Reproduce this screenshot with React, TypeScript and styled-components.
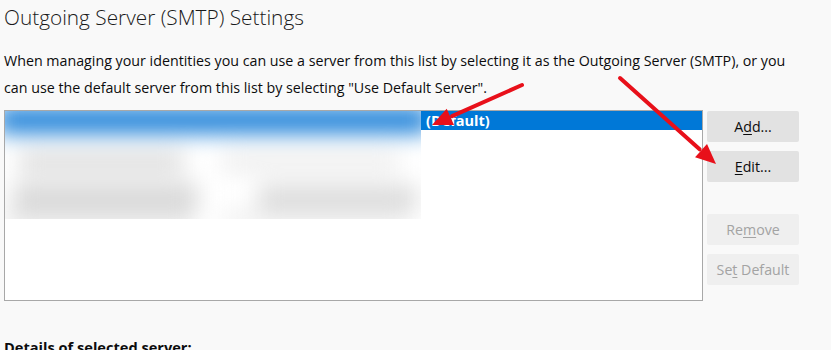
import React from "react";
import styled, { createGlobalStyle } from "styled-components";

const GlobalStyle = createGlobalStyle`
  body {
    margin: 0;
    background: #f9f9f9;
    font-family: "Open Sans", "Noto Sans", sans-serif;
    color: #0c0c0d;
    overflow: hidden;
  }
`;

const Page = styled.div`
  position: relative;
  padding: 0 4px;
  height: 350px;
  overflow: hidden;
`;

const Title = styled.h1`
  margin: 0;
  padding-top: 2px;
  font-size: 20.8px;
  font-weight: 300;
  line-height: 30px;
  color: #1a1a1a;
`;

const Description = styled.p`
  max-width: 790px;
  margin: 15px 0 0;
  font-size: 14.25px;
  line-height: 27px;
  color: #0c0c0d;
`;

const ServerRow = styled.div`
  display: flex;
  align-items: flex-start;
  gap: 4px;
  margin-top: 9px;
`;

const ListBox = styled.div`
  position: relative;
  width: 697px;
  height: 189px;
  background: #ffffff;
  border: 1px solid #a8a8a8;
  overflow: hidden;
`;

const ServerItem = styled.div<{ $selected?: boolean }>`
  display: flex;
  align-items: center;
  height: 19px;
  padding-left: 421px;
  background: ${(p) => (p.$selected ? "#0078d7" : "transparent")};
  color: ${(p) => (p.$selected ? "#ffffff" : "#0c0c0d")};
  font-size: 14.5px;
  font-weight: 700;
`;

/* redacted server names, smeared out in the screenshot */
const Redaction = styled.div`
  position: absolute;
  left: 0;
  top: 0;
  width: 416px;
  height: 108px;
  background: #ffffff;
  overflow: hidden;
`;

const Smear = styled.div`
  display: grid;
  grid-template-columns: 1fr 1fr;
  grid-template-rows: 26px 16px 24px 8px 30px 20px;
  gap: 0 18px;
  margin: -4px -8px 0;
  filter: blur(11px);
`;

const SmearBar = styled.div<{ $tone: string; $span?: boolean; $inset?: string }>`
  background: ${(p) => p.$tone};
  grid-column: ${(p) => (p.$span ? "1 / 3" : "auto")};
  margin: ${(p) => p.$inset ?? "0"};
`;

const ButtonColumn = styled.div`
  display: flex;
  flex-direction: column;
  width: 92px;
  padding-top: 1px;
`;

const ActionButton = styled.button<{ $gapBefore?: number }>`
  height: 31px;
  margin-top: ${(p) => p.$gapBefore ?? 0}px;
  border: none;
  border-radius: 2px;
  background: ${(p) => (p.disabled ? "#efefef" : "#e2e2e2")};
  color: ${(p) => (p.disabled ? "#a3a3a3" : "#0c0c0d")};
  font-family: "Open Sans", "Noto Sans", sans-serif;
  font-size: 14.2px;
  padding: 0;
  cursor: ${(p) => (p.disabled ? "default" : "pointer")};
  & u {
    text-underline-offset: 2px;
  }
`;

const DetailsHeading = styled.h2`
  margin: 36px 0 0;
  font-size: 14.6px;
  font-weight: 700;
  line-height: 20px;
`;

const Annotations = styled.svg`
  position: absolute;
  left: 0;
  top: 0;
  pointer-events: none;
`;

function Arrow({ x1, y1, x2, y2 }: { x1: number; y1: number; x2: number; y2: number }) {
  const angle = Math.atan2(y2 - y1, x2 - x1);
  const len = 22;
  const spread = 0.42;
  const back = (a: number) => [x2 - len * Math.cos(a), y2 - len * Math.sin(a)];
  const [lx, ly] = back(angle - spread);
  const [rx, ry] = back(angle + spread);
  const [sx, sy] = back(angle);
  return (
    <g>
      <line x1={x1} y1={y1} x2={sx} y2={sy} stroke="#e8101a" strokeWidth={4} strokeLinecap="round" />
      <polygon points={`${x2},${y2} ${lx},${ly} ${rx},${ry}`} fill="#e8101a" />
    </g>
  );
}

export default function App() {
  return (
    <Page>
      <GlobalStyle />
      <Title>Outgoing Server (SMTP) Settings</Title>
      <Description>
        When managing your identities you can use a server from this list by selecting it as the
        Outgoing Server (SMTP), or you can use the default server from this list by selecting "Use
        Default Server".
      </Description>
      <ServerRow>
        <ListBox>
          <ServerItem $selected>(Default)</ServerItem>
          <ServerItem />
          <ServerItem />
          <Redaction>
            <Smear>
              <SmearBar $tone="#1a7fd8" $span />
              <SmearBar $tone="#ffffff" $span />
              <SmearBar $tone="#dedede" $inset="2px 20px 0 22px" />
              <SmearBar $tone="#efefef" $inset="2px 30px 0 0" />
              <SmearBar $tone="#ffffff" $span />
              <SmearBar $tone="#d9d9d9" $inset="2px 6px 0 16px" />
              <SmearBar $tone="#dcdcdc" $inset="4px 12px 0 36px" />
              <SmearBar $tone="#e6e6e6" $inset="0 10px 4px 8px" />
              <SmearBar $tone="#efefef" $inset="0 20px 4px 0" />
            </Smear>
          </Redaction>
        </ListBox>
        <ButtonColumn>
          <ActionButton>
            A<u>d</u>d...
          </ActionButton>
          <ActionButton $gapBefore={9}>
            <u>E</u>dit...
          </ActionButton>
          <ActionButton $gapBefore={32} disabled>
            Re<u>m</u>ove
          </ActionButton>
          <ActionButton $gapBefore={9} disabled>
            Se<u>t</u> Default
          </ActionButton>
        </ButtonColumn>
      </ServerRow>
      <DetailsHeading>Details of selected server:</DetailsHeading>
      <Annotations width={831} height={350}>
        <Arrow x1={522} y1={85} x2={432} y2={125} />
        <Arrow x1={620} y1={78} x2={716} y2={164} />
      </Annotations>
    </Page>
  );
}
